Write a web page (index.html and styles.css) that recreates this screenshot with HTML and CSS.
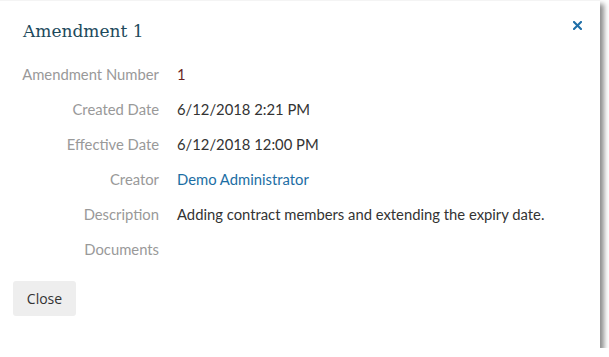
FILE: index.html
```html
<!DOCTYPE html>
<html lang="en">
<head>
  <meta charset="UTF-8">
  <title>Amendment 1</title>
  <link rel="stylesheet" href="styles.css">
</head>
<body>
  <div class="modal">
    <div class="modal-header">
      <h1 class="modal-title">Amendment 1</h1>
      <button class="close-x" aria-label="Close">
        <svg width="9" height="9" viewBox="0 0 9 9">
          <path d="M1 1 L8 8 M8 1 L1 8" stroke="#1f6fa8" stroke-width="2.1" stroke-linecap="square"/>
        </svg>
      </button>
    </div>

    <dl class="details">
      <dt>Amendment Number</dt>
      <dd class="number">1</dd>
      <dt>Created Date</dt>
      <dd>6/12/2018 2:21 PM</dd>
      <dt>Effective Date</dt>
      <dd>6/12/2018 12:00 PM</dd>
      <dt>Creator</dt>
      <dd><a href="#" class="link">Demo Administrator</a></dd>
      <dt>Description</dt>
      <dd>Adding contract members and extending the expiry date.</dd>
      <dt>Documents</dt>
      <dd></dd>
    </dl>

    <div class="modal-footer">
      <button class="btn">Close</button>
    </div>
  </div>
</body>
</html>
```

FILE: styles.css
```css
body {
  margin: 0;
  background-color: #ffffff;
  font-family: 'Lato', sans-serif;
}

.modal {
  width: 600px;
  height: 348px;
  box-sizing: border-box;
  background-color: #ffffff;
  border-top: 1px solid #f4f4f4;
  box-shadow: 4px 4px 5px rgba(0, 0, 0, 0.45);
}

.modal-header {
  display: flex;
  justify-content: space-between;
  align-items: flex-start;
  padding: 18px 18px 0 23px;
  height: 26px;
}

.modal-title {
  margin: 2px 0 0;
  font-family: 'DejaVu Serif', serif;
  font-weight: normal;
  font-size: 17px;
  color: #1d4a5c;
}

.close-x {
  background: none;
  border: none;
  padding: 0;
  margin-top: 2px;
  cursor: pointer;
  display: flex;
}

.details {
  display: grid;
  grid-template-columns: 137px 1fr;
  column-gap: 18px;
  grid-auto-rows: 35px;
  margin: 11px 0 0 22px;
  font-size: 14.8px;
  align-items: center;
}

.details dt {
  text-align: right;
  color: #999999;
}

.details dd {
  margin: 0;
  color: #333333;
}

.details .number {
  color: #6a1f1f;
}

.link {
  color: #1c6ea4;
  text-decoration: none;
}

.modal-footer {
  padding: 15px 13px;
}

.btn {
  font-family: 'Open Sans', sans-serif;
  font-size: 14px;
  color: #333333;
  background-color: #eeeeee;
  border: none;
  border-radius: 3px;
  width: 63px;
  height: 35px;
  cursor: pointer;
}
```
